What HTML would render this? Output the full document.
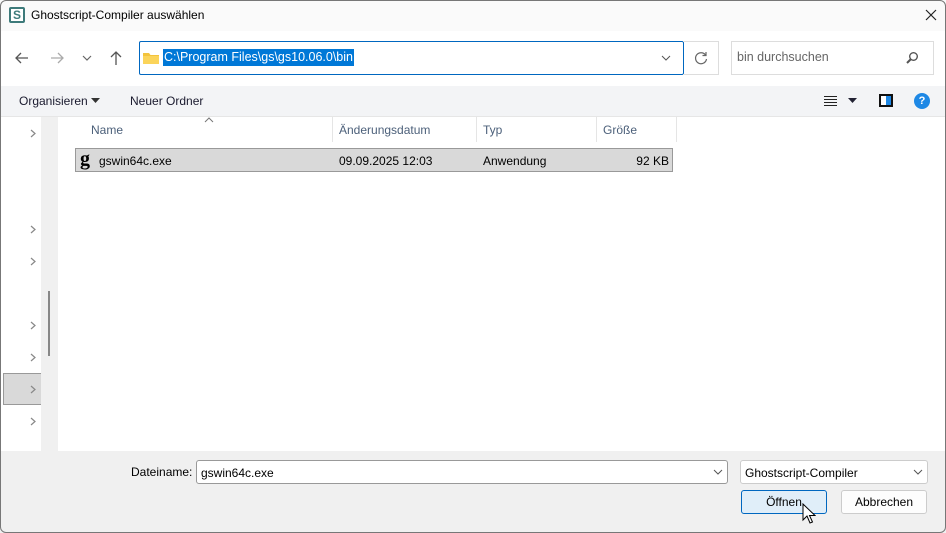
<!DOCTYPE html>
<html><head><meta charset="utf-8"><style>
*{box-sizing:border-box;margin:0;padding:0}
body{width:946px;height:533px;overflow:hidden;font-family:"Liberation Sans",sans-serif;font-size:12px;color:#000;background:#fff;position:relative}
.a{position:absolute}
</style></head><body>
<div class="a" style="left:0;top:0;width:946px;height:31px;background:#fafafa"></div>
<div class="a" style="left:9px;top:7px;width:16px;height:16px;border:2px solid #3d7a7a;border-radius:2px;background:#fff;color:#3d7a7a;font-weight:bold;font-size:12px;line-height:12px;text-align:center">S</div>
<div class="a" style="left:31px;top:8px;font-size:12px">Ghostscript-Compiler auswählen</div>
<svg class="a" style="left:925px;top:9px" width="12" height="12"><path d="M1 1L11 11M11 1L1 11" stroke="#222" stroke-width="1.2"/></svg>
<svg class="a" style="left:14px;top:50px" width="16" height="16"><path d="M14 8H2M7 3L2 8L7 13" stroke="#555" fill="none" stroke-width="1.3"/></svg>
<svg class="a" style="left:49px;top:50px" width="16" height="16"><path d="M2 8H14M9 3L14 8L9 13" stroke="#aaa" fill="none" stroke-width="1.3"/></svg>
<svg class="a" style="left:82px;top:54px" width="10" height="8"><path d="M1 2L5 6L9 2" stroke="#666" fill="none" stroke-width="1.2"/></svg>
<svg class="a" style="left:108px;top:50px" width="16" height="16"><path d="M8 15V2M3 7L8 2L13 7" stroke="#555" fill="none" stroke-width="1.3"/></svg>
<div class="a" style="left:139px;top:41px;width:545px;height:34px;border:1px solid #0067c0;border-radius:2px;background:#fff"></div>
<div class="a" style="left:683px;top:41px;width:36px;height:34px;border:1px solid #ddd;border-left:none"></div>
<svg class="a" style="left:142px;top:51px" width="18" height="14"><path d="M1 2h6l1.5 2H17v9H1z" fill="#f3c33c"/><path d="M1 5h16v8H1z" fill="#fbd45a"/></svg>
<div class="a" style="left:163px;top:49px;height:17px;background:#0078d7;color:#fff;font-size:12.5px;line-height:17px;padding:0 1px">C:\Program Files\gs\gs10.06.0\bin</div>
<svg class="a" style="left:661px;top:55px" width="10" height="7"><path d="M1 1L5 5L9 1" stroke="#555" fill="none" stroke-width="1"/></svg>
<svg class="a" style="left:693px;top:50px" width="16" height="16"><path d="M12.5 5A5.5 5.5 0 1 0 13.5 9" stroke="#666" fill="none" stroke-width="1.2"/><path d="M13 2V5.5H9.5" stroke="#666" fill="none" stroke-width="1.2"/></svg>
<div class="a" style="left:731px;top:41px;width:203px;height:34px;border:1px solid #ddd;background:#fff"></div>
<div class="a" style="left:737px;top:50px;color:#666;font-size:12.5px">bin durchsuchen</div>
<svg class="a" style="left:905px;top:51px" width="14" height="14"><circle cx="8.5" cy="5.5" r="3.8" stroke="#555" stroke-width="1.4" fill="none"/><path d="M6 8L2 12" stroke="#555" stroke-width="2"/></svg>
<div class="a" style="left:0;top:86px;width:946px;height:31px;background:#f3f4f6;border-bottom:1px solid #e6e6e6"></div>
<div class="a" style="left:19px;top:94px;color:#1a1a2e">Organisieren</div>
<svg class="a" style="left:91px;top:98px" width="9" height="6"><path d="M0 0H9L4.5 5z" fill="#333"/></svg>
<div class="a" style="left:130px;top:94px;color:#1a1a2e">Neuer Ordner</div>
<svg class="a" style="left:824px;top:95px" width="14" height="12"><path d="M0 1.5H13M0 4.5H13M0 7.5H13M0 10.5H13" stroke="#222"/></svg>
<svg class="a" style="left:848px;top:98px" width="9" height="6"><path d="M0 0H9L4.5 5z" fill="#223"/></svg>
<div class="a" style="left:879px;top:94px;width:14px;height:13px;border:2px solid #111;background:linear-gradient(90deg,#fff 50%,#1e88e5 50%)"></div>
<div class="a" style="left:914px;top:93px;width:16px;height:16px;border-radius:50%;background:#1e88e5;color:#fff;font-weight:bold;font-size:11px;text-align:center;line-height:16px">?</div>
<div class="a" style="left:41px;top:117px;width:17px;height:334px;background:#f0f0f0"></div>
<div class="a" style="left:48px;top:291px;width:2px;height:65px;background:#888"></div>
<div class="a" style="left:3px;top:373px;width:38px;height:32px;background:#d9d9d9;border:1px solid #999;border-right:none"></div>
<svg class="a" style="left:30px;top:129px" width="6" height="9"><path d="M1 1L5 4.5L1 8" stroke="#888" fill="none" stroke-width="1.2"/></svg>
<svg class="a" style="left:30px;top:225px" width="6" height="9"><path d="M1 1L5 4.5L1 8" stroke="#888" fill="none" stroke-width="1.2"/></svg>
<svg class="a" style="left:30px;top:257px" width="6" height="9"><path d="M1 1L5 4.5L1 8" stroke="#888" fill="none" stroke-width="1.2"/></svg>
<svg class="a" style="left:30px;top:321px" width="6" height="9"><path d="M1 1L5 4.5L1 8" stroke="#888" fill="none" stroke-width="1.2"/></svg>
<svg class="a" style="left:30px;top:353px" width="6" height="9"><path d="M1 1L5 4.5L1 8" stroke="#888" fill="none" stroke-width="1.2"/></svg>
<svg class="a" style="left:30px;top:385px" width="6" height="9"><path d="M1 1L5 4.5L1 8" stroke="#888" fill="none" stroke-width="1.2"/></svg>
<svg class="a" style="left:30px;top:417px" width="6" height="9"><path d="M1 1L5 4.5L1 8" stroke="#888" fill="none" stroke-width="1.2"/></svg>
<svg class="a" style="left:204px;top:117px" width="10" height="6"><path d="M1 5L5 1L9 5" stroke="#777" fill="none"/></svg>
<div class="a" style="left:91px;top:123px;color:#4c607a">Name</div>
<div class="a" style="left:332px;top:117px;width:1px;height:25px;background:#e5e5e5"></div>
<div class="a" style="left:339px;top:123px;color:#4c607a">Änderungsdatum</div>
<div class="a" style="left:476px;top:117px;width:1px;height:25px;background:#e5e5e5"></div>
<div class="a" style="left:483px;top:123px;color:#4c607a">Typ</div>
<div class="a" style="left:596px;top:117px;width:1px;height:25px;background:#e5e5e5"></div>
<div class="a" style="left:603px;top:123px;color:#4c607a">Größe</div>
<div class="a" style="left:676px;top:117px;width:1px;height:25px;background:#e5e5e5"></div>
<div class="a" style="left:75px;top:148px;width:598px;height:24px;background:#d9d9d9;border:1px solid #999"></div>
<div class="a" style="left:80px;top:148px;font-family:'Liberation Serif',serif;font-weight:bold;font-size:20px;line-height:22px">g</div>
<div class="a" style="left:99px;top:154px">gswin64c.exe</div>
<div class="a" style="left:339px;top:154px">09.09.2025 12:03</div>
<div class="a" style="left:483px;top:154px">Anwendung</div>
<div class="a" style="left:603px;top:154px;width:66px;text-align:right">92 KB</div>
<div class="a" style="left:0;top:451px;width:946px;height:82px;background:#f0f0f0"></div>
<div class="a" style="left:131px;top:465px">Dateiname:</div>
<div class="a" style="left:196px;top:460px;width:532px;height:24px;border:1px solid #999;border-radius:3px;background:#fff;padding:5px 4px">gswin64c.exe</div>
<svg class="a" style="left:713px;top:469px" width="10" height="7"><path d="M1 1L5 5L9 1" stroke="#555" fill="none"/></svg>
<div class="a" style="left:740px;top:460px;width:188px;height:24px;border:1px solid #ccc;border-radius:3px;background:#fff;padding:5px 4px">Ghostscript-Compiler</div>
<svg class="a" style="left:913px;top:469px" width="10" height="7"><path d="M1 1L5 5L9 1" stroke="#555" fill="none"/></svg>
<div class="a" style="left:741px;top:490px;width:86px;height:24px;border:1px solid #0067c0;border-radius:3px;background:#e0eef9;text-align:center;line-height:22px">Öffnen</div>
<div class="a" style="left:841px;top:490px;width:86px;height:24px;border:1px solid #ccc;border-radius:3px;background:#fdfdfd;text-align:center;line-height:22px">Abbrechen</div>
<svg class="a" style="left:802px;top:503px" width="14" height="22"><path d="M1 1V17L5 13L8 20L10.5 19L7.5 12.5H13z" fill="#fff" stroke="#000"/></svg>
<div class="a" style="left:0;top:0;width:946px;height:533px;border:1px solid #777;border-radius:6px;pointer-events:none"></div>
</body></html>
